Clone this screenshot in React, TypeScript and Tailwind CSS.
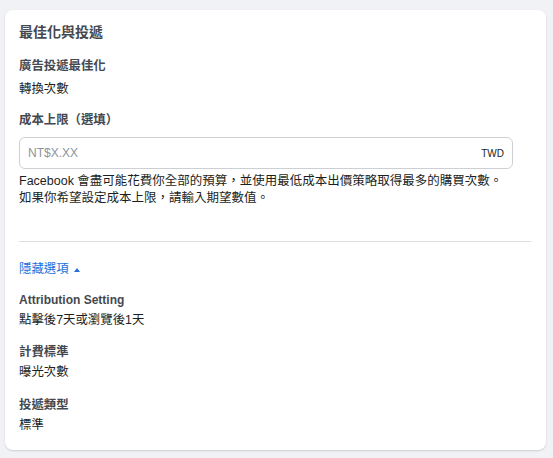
export default function App() {
  return (
    <main
      className="min-h-screen bg-[#f0f2f5] pl-[5px] pr-[7px] pt-[10px] pb-[11px] text-[#1c1e21]"
      style={{ fontFamily: '"Liberation Sans", "Noto Sans CJK TC", sans-serif' }}
    >
      <div className="bg-white rounded-lg shadow-[0_1px_2px_rgba(0,0,0,0.15)] px-[14px] pt-[12px] pb-[15px]">
        <h2 className="text-sm font-bold text-[#444950] leading-5">最佳化與投遞</h2>

        <div className="mt-[14px]">
          <div className="text-[12.4px] font-bold leading-5 text-[#444950]">廣告投遞最佳化</div>
          <div className="text-[12.4px] leading-5 mt-[3px]">轉換次數</div>
        </div>

        <div className="mt-[11px]">
          <div className="text-[12.4px] font-bold leading-5 text-[#444950]">成本上限（選填）</div>
          <div className="mt-[7px] mr-[19px] h-8 border border-[#ccd0d5] rounded-md flex items-center justify-between px-[8px]">
            <span className="text-xs text-[#8d949e]">NT$X.XX</span>
            <span className="text-[10px] text-[#1c1e21]">TWD</span>
          </div>
          <p className="text-[12.5px] leading-[17px] mt-[4px]">
            Facebook 會盡可能花費你全部的預算，並使用最低成本出價策略取得最多的購買次數。
            <br />
            如果你希望設定成本上限，請輸入期望數值。
          </p>
        </div>

        <div className="h-px bg-[#dadde1] mt-[34px] mr-[1px]" />

        <div className="mt-[17px] flex items-center gap-[5px] text-[12.4px] text-[#216fdb] leading-5">
          隱藏選項
          <svg width="6" height="4" viewBox="0 0 6 4" className="mt-[1px]">
            <path d="M0 4 L3 0 L6 4 Z" fill="#216fdb" />
          </svg>
        </div>

        <div className="mt-[11px]">
          <div className="text-xs font-bold leading-5 text-[#444950]">Attribution Setting</div>
          <div className="text-[12.4px] leading-5">點擊後7天或瀏覽後1天</div>
        </div>

        <div className="mt-[12px]">
          <div className="text-[12.4px] font-bold leading-5 text-[#444950]">計費標準</div>
          <div className="text-[12.4px] leading-5">曝光次數</div>
        </div>

        <div className="mt-[13px]">
          <div className="text-[12.4px] font-bold leading-5 text-[#444950]">投遞類型</div>
          <div className="text-[12.4px] leading-5">標準</div>
        </div>
      </div>
    </main>
  )
}
